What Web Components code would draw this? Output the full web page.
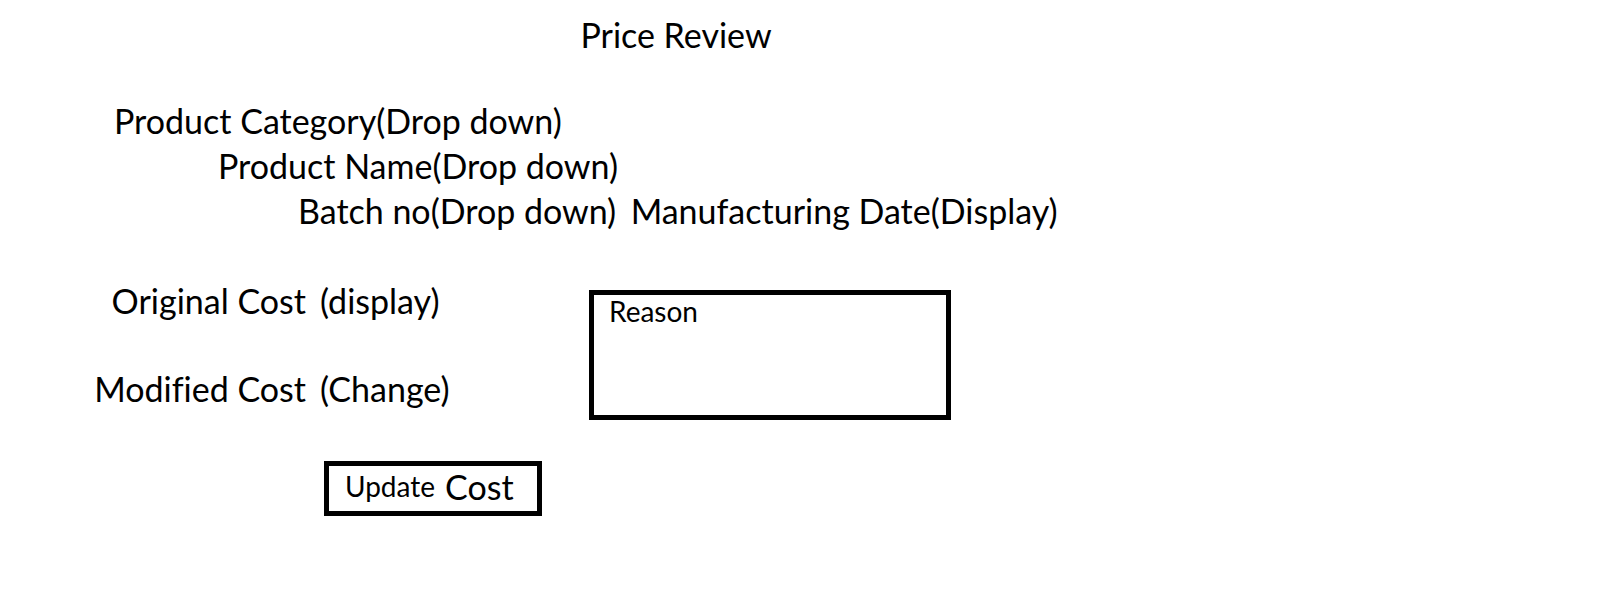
<!DOCTYPE html>
<html lang="en">
<head>
<meta charset="utf-8">
<meta name="viewport" content="width=device-width, initial-scale=1">
<title>Price Review</title>
<style>
  body { margin: 0; background: #fff; color: #000; font: 34px/45px Lato, "Open Sans", sans-serif; font-variant-ligatures: none; }
</style>
</head>
<body>
<price-review></price-review>

<script>
class PickField extends HTMLElement {
  connectedCallback() {
    this.attachShadow({ mode: "open" }).innerHTML = `
      <style>
        :host { display: flex; white-space: nowrap; }
        select { appearance: none; border: 0; margin: 0; padding: 0; background: none; color: inherit; font: inherit; }
      </style>
      <label for="pick"><slot></slot></label><select id="pick"><option>(Drop down)</option></select>`;
  }
}
customElements.define("pick-field", PickField);

class ShowField extends HTMLElement {
  connectedCallback() {
    this.attachShadow({ mode: "open" }).innerHTML = `
      <style>
        :host { display: flex; gap: var(--field-gap, 0px); white-space: nowrap; }
        label { min-width: var(--label-width, auto); text-align: right; }
      </style>
      <label for="value"><slot></slot></label><output id="value"><slot name="value"></slot></output>`;
  }
}
customElements.define("show-field", ShowField);

class EditField extends HTMLElement {
  connectedCallback() {
    this.attachShadow({ mode: "open" }).innerHTML = `
      <style>
        :host { display: flex; gap: var(--field-gap, 0px); white-space: nowrap; }
        label { min-width: var(--label-width, auto); text-align: right; }
        input { width: 160px; height: 45px; border: 0; margin: 0; padding: 0; background: none; color: inherit; font: inherit; outline: 0; }
      </style>
      <label for="value"><slot></slot></label><input id="value" value="${this.getAttribute("value")}">`;
  }
}
customElements.define("edit-field", EditField);

class ReasonBox extends HTMLElement {
  connectedCallback() {
    this.attachShadow({ mode: "open" }).innerHTML = `
      <style>
        :host { display: block; }
        textarea { display: block; box-sizing: border-box; width: 100%; height: 130px; margin: 0; padding: 0 15px;
          border: 5px solid #000; border-radius: 0; background: #fff; color: inherit; font: inherit;
          font-size: 28px; line-height: 32px; resize: none; outline: 0; }
        textarea::placeholder { color: inherit; opacity: 1; }
      </style>
      <textarea aria-label="Reason" placeholder="Reason"></textarea>`;
  }
}
customElements.define("reason-box", ReasonBox);

class UpdateButton extends HTMLElement {
  connectedCallback() {
    this.attachShadow({ mode: "open" }).innerHTML = `
      <style>
        :host { display: block; }
        button { display: flex; align-items: center; gap: 10px; box-sizing: border-box;
          width: 218px; padding: 0 16px 4px; border: 5px solid #000; background: #fff; color: inherit; font: inherit;
          line-height: 41px; cursor: pointer; }
        small { font-size: 28px; }
      </style>
      <button type="button"><small>Update</small> <span>Cost</span></button>`;
  }
}
customElements.define("update-button", UpdateButton);

class PriceReview extends HTMLElement {
  connectedCallback() {
    this.attachShadow({ mode: "open" }).innerHTML = `
      <style>
        :host { display: block; }
        main { max-width: 1352px; padding: 12px 0 40px; }
        h1 { margin: 0 0 41px; font: inherit; text-align: center; }
        .product { padding-left: 114px; }
        .name { margin-left: 104px; }
        .batch { display: flex; gap: 14px; margin-left: 184px; }
        .cost { display: flex; align-items: flex-start; margin-top: 45px; }
        .amounts { flex: 0 0 589px; --label-width: 306px; --field-gap: 14px; }
        edit-field { margin-top: 43px; }
        update-button { margin: 50px 0 0 324px; }
        reason-box { flex: 0 1 362px; margin-top: 12px; }
      </style>
      <main>
        <h1>Price Review</h1>
        <section class="product">
          <pick-field>Product Category</pick-field>
          <pick-field class="name">Product Name</pick-field>
          <div class="batch">
            <pick-field>Batch no</pick-field>
            <show-field>Manufacturing Date<span slot="value">(Display)</span></show-field>
          </div>
        </section>
        <section class="cost">
          <div class="amounts">
            <show-field>Original Cost<span slot="value">(display)</span></show-field>
            <edit-field value="(Change)">Modified Cost</edit-field>
            <update-button></update-button>
          </div>
          <reason-box></reason-box>
        </section>
      </main>`;
  }
}
customElements.define("price-review", PriceReview);
</script>
</body>
</html>
